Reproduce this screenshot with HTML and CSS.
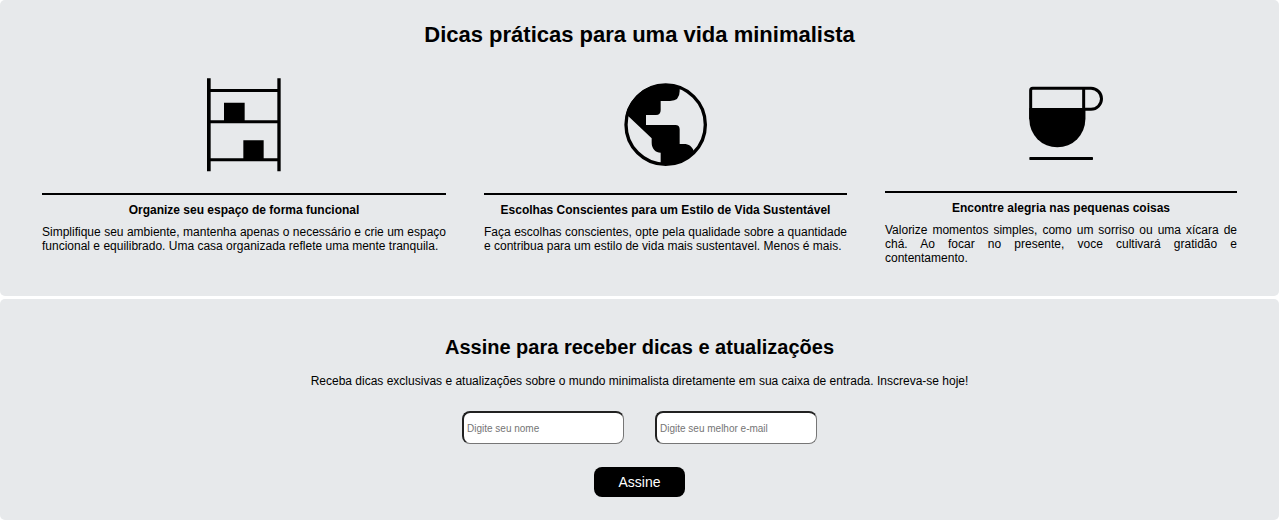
FILE: index.html
```html
<!DOCTYPE html>
<html lang="pt-BR">
<head>
<meta charset="utf-8">
<meta name="viewport" content="width=device-width, initial-scale=1">
<title>Vida minimalista</title>
<link rel="stylesheet" href="styles.css">
</head>
<body>
<main class="page">
  <section class="panel tips">
    <h2 class="tips-title">Dicas práticas para uma vida minimalista</h2>
    <div class="tips-grid">
      <article class="tip">
        <svg class="tip-icon" viewBox="12 15 300 300" aria-hidden="true">
          <path d="M51 25h11v279H51zM262 25h10v279h-10zM56 57h210v9H56zM56 151h210v9H56zM56 265h210v9H56zM102 98h62v57h-62zM160 211h61v58h-61z"/>
        </svg>
        <h3 class="tip-title">Organize seu espaço de forma funcional</h3>
        <p class="tip-text">Simplifique seu ambiente, mantenha apenas o necessário e crie um espaço funcional e equilibrado. Uma casa organizada reflete uma mente tranquila.</p>
      </article>
      <article class="tip">
        <svg class="tip-icon" viewBox="18 15 300 300" aria-hidden="true">
          <circle cx="167" cy="164" r="119" fill="none" stroke="#000" stroke-width="10"/>
          <path d="M48 132L125 205V218C125 236 137 248 152 248V284A120 120 0 0 0 252 245C247 229 236 222 222 222H209V178Q209 165 196 165H108V135H138Q152 135 152 121V93H180Q209 93 209 64V51A120 120 0 0 0 48 132Z"/>
        </svg>
        <h3 class="tip-title">Escolhas Conscientes para um Estilo de Vida Sustentável</h3>
        <p class="tip-text">Faça escolhas conscientes, opte pela qualidade sobre a quantidade e contribua para um estilo de vida mais sustentavel. Menos é mais.</p>
      </article>
      <article class="tip">
        <svg class="tip-icon tip-icon-cup" viewBox="6 15 294 294" aria-hidden="true">
          <path d="M62 148V61Q62 55 68 55H243A31 31 0 0 1 243 118H222M221 55V148" fill="none" stroke="#000" stroke-width="9"/>
          <path d="M58 114H226V148A84 84 0 0 1 58 148Z"/>
          <rect x="58" y="261" width="191" height="9" rx="2"/>
        </svg>
        <h3 class="tip-title">Encontre alegria nas pequenas coisas</h3>
        <p class="tip-text">Valorize momentos simples, como um sorriso ou uma xícara de chá. Ao focar no presente, voce cultivará gratidão e contentamento.</p>
      </article>
    </div>
  </section>
  <section class="panel signup">
    <h2 class="signup-title">Assine para receber dicas e atualizações</h2>
    <p class="signup-text">Receba dicas exclusivas e atualizações sobre o mundo minimalista diretamente em sua caixa de entrada. Inscreva-se hoje!</p>
    <form class="signup-form">
      <div class="signup-fields">
        <input class="field" type="text" placeholder="Digite seu nome" aria-label="Nome">
        <input class="field" type="email" placeholder="Digite seu melhor e-mail" aria-label="E-mail">
      </div>
      <button class="signup-button" type="submit">Assine</button>
    </form>
  </section>
</main>
</body>
</html>
```
FILE: styles.css
```css
* {
  box-sizing: border-box;
}

body {
  margin: 0;
  background: #fff;
  color: #000;
  font-family: "Liberation Sans", Arial, sans-serif;
}

h2,
h3,
p {
  margin: 0;
}

.page {
  display: flex;
  flex-direction: column;
  gap: 3px;
  padding-right: 1px;
}

.panel {
  background: #e7e9eb;
  border-radius: 5px;
}

.tips {
  padding: 22px 42px 31px;
}

.tips-title {
  font-size: 22px;
  line-height: 26px;
  text-align: center;
}

.tips-grid {
  display: grid;
  grid-template-columns: 404fr 363fr 352fr;
  gap: 38px;
  margin-top: 27px;
}

.tip {
  display: flex;
  flex-direction: column;
}

.tip-icon {
  width: 100px;
  height: 100px;
  align-self: center;
}

.tip-icon-cup {
  width: 98px;
  height: 98px;
}

.tip-title {
  margin-top: 18px;
  padding-top: 8px;
  border-top: 2px solid #000;
  font-size: 12px;
  line-height: 14px;
  text-align: center;
}

.tip-text {
  margin-top: 8px;
  font-size: 12px;
  line-height: 14px;
  text-align: justify;
}

.signup {
  display: flex;
  flex-direction: column;
  align-items: center;
  padding: 36px 42px 23px;
}

.signup-title {
  font-size: 20px;
  line-height: 24px;
}

.signup-text {
  margin-top: 14px;
  font-size: 12px;
  line-height: 16px;
}

.signup-form {
  display: flex;
  flex-direction: column;
  align-items: center;
  gap: 23px;
  margin-top: 22px;
}

.signup-fields {
  display: flex;
  gap: 31px;
}

.field {
  width: 162px;
  height: 33px;
  padding: 0 3px;
  border: 2px inset #767676;
  border-width: 2px 1px 1px 2px;
  border-radius: 8px;
  background: #fff;
  font-family: inherit;
  font-size: 10px;
}

.field::placeholder {
  color: #757575;
}

.signup-button {
  width: 91px;
  height: 30px;
  padding: 0;
  border: 0;
  border-radius: 8px;
  background: #000;
  color: #fff;
  font-family: inherit;
  font-size: 14px;
}
```
